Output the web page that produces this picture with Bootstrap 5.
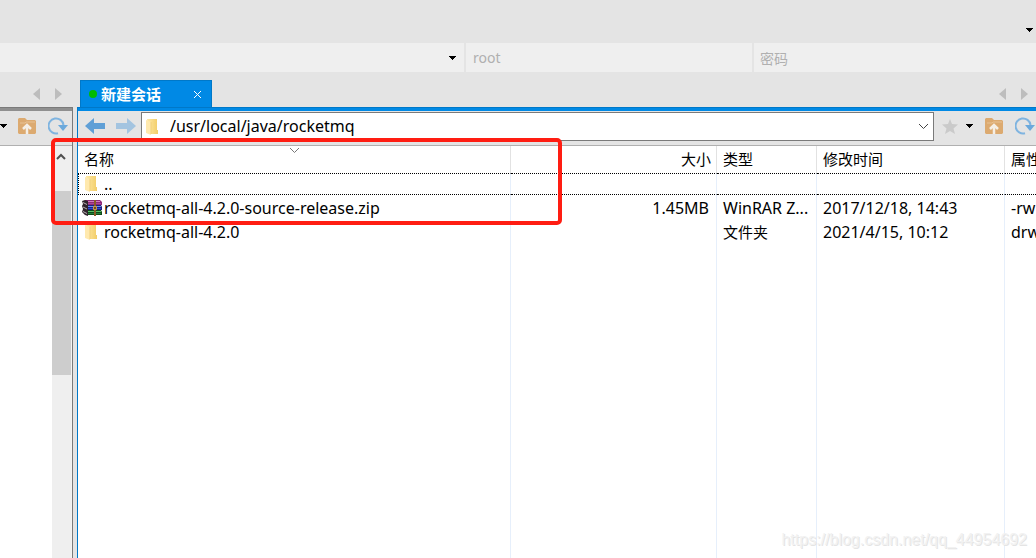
<!DOCTYPE html>
<html lang="zh-CN">
<head>
<meta charset="utf-8">
<meta name="viewport" content="width=device-width, initial-scale=1">
<title>新建会话</title>
<link href="https://cdn.jsdelivr.net/npm/bootstrap@5.3.0/dist/css/bootstrap.min.css" rel="stylesheet">
<style>
  :root { --chrome: #e4e4e4; --field: #efefef; --blue: #0089e5; --blue-edge: #0078c8; --edge: #7a7a7a; --split: #e6effb; }
  body { font-family: "Noto Sans", "Noto Sans CJK SC", sans-serif; font-size: 15px; line-height: 24px; color: #000; background: var(--chrome); }
  button { border: 0; background: none; padding: 0; display: flex; }
  svg { display: block; flex: none; }
  .menu-strip { height: 43px; padding: 28px 3px 0 0; }
  .login-bar { height: 29px; gap: 2px; font-size: 14px; }
  .login-field { background: var(--field); border: 0; border-radius: 0; outline: 0; min-width: 0; color: #000; }
  .login-field::placeholder { color: #b0b0b0; opacity: 1; }
  .host-box { flex: 0 0 464px; }
  .host-box select { appearance: none; width: 100%; height: 100%; }
  .host-box svg { position: absolute; right: 8px; top: 13px; pointer-events: none; }
  .user-field { flex: 0 0 286px; padding: 1px 7px 0; }
  .pass-field { padding: 2px 6px 0; }
  .panes { gap: 4px; }
  .local-pane { flex: 0 0 73px; }
  .tab-strip { height: 35px; }
  .tab-arrows { gap: 15px; padding: 16px 8px 0 0; }
  .local-pane .tab-arrows { padding-right: 11px; }
  .session-tab { margin: 8px 0 0 3px; width: 132px; padding: 0 10px 0 8px; background: var(--blue); border: 1px solid var(--blue-edge); border-bottom: 0; color: #fff; font-weight: 700; }
  .status-dot { width: 8px; height: 8px; background: #0b0; margin-right: 4px; }
  .local-frame { border-right: 1px solid var(--edge); border-top: 1px solid var(--edge); }
  .remote-frame { border-left: 1px solid var(--blue-edge); border-top: 1px solid var(--blue-edge); }
  .local-rule { height: 3px; background: #8f8f8f; }
  .remote-rule { height: 3px; background: var(--blue); }
  .tool-row { height: 35px; border-bottom: 1px solid #b0b0b0; padding-bottom: 4px; }
  .history { gap: 11px; padding: 0 5px 0 7px; }
  .path-box { height: 29px; margin-top: 1px; background: #fff; border: 1px solid var(--edge); padding: 0 4px; }
  .path-box input { border: 0; outline: 0; padding: 0 0 2px 8px; min-width: 0; font-size: 16px; color: #000; background: none; }
  .right-tools { flex: 0 0 102px; padding-left: 8px; overflow: hidden; }
  .scroll-track { width: 20px; background: var(--field); border-right: 1px solid #f4f4f4; }
  .scroll-up { height: 45px; padding: 7px 0 0 4px; }
  .scroll-thumb { flex: 0 0 184px; background: #cdcdcd; }
  .file-table { table-layout: fixed; width: 100%; height: 100%; border-collapse: separate; border-spacing: 0; }
  .file-table th, .file-table td { padding: 0 6px; height: 24px; border-right: 1px solid var(--split); overflow: hidden; white-space: nowrap; }
  .file-table td { font-size: 16px; padding-top: 2px; line-height: 22px; }
  .file-table td.kind { font-size: 15px; }
  .file-table th { height: 27px; padding-bottom: 2px; font-weight: 400; line-height: 22px; border-right-color: #e2e2e2; position: relative; }
  .file-table th:last-child, .file-table td:last-child { border-right: 0; }
  .file-table tr.current td { height: 22px; padding-top: 0; border-top: 1px dotted #000; border-bottom: 1px dotted #000; line-height: 20px; }
  .file-table tr.current td:first-child { border-left: 1px dotted #000; padding-left: 3px; }
  .file-table tr.filler td { height: auto; }
  .file-table td:first-child { padding-left: 4px; padding-right: 0; }
  .file-table .size { text-align: right; }
  .file-table th.size { padding-right: 5px; }
  .file-table td.size { padding-right: 7px; }
  .sort-mark { position: absolute; left: 211px; top: 1px; }
  .file-name { gap: 2px; }
  .file-name .folder { margin: 0 5px 0 3px; }
  .callout { position: absolute; left: 51px; top: 138px; width: 511px; height: 87px; border: 4px solid #ff1d12; border-radius: 5px; pointer-events: none; }
  .watermark { position: absolute; right: 9px; bottom: 6px; font: 16px/24px "Liberation Sans", sans-serif; color: #f2f2f2; text-shadow: 1px 1px 0 #e4e4e4; pointer-events: none; }
</style>
</head>
<body class="vh-100 overflow-hidden position-relative d-flex flex-column">

<svg width="0" height="0" class="position-absolute" aria-hidden="true">
  <defs>
    <linearGradient id="gold" x1="0" x2="1"><stop offset="0" stop-color="#ffe9a6"/><stop offset="1" stop-color="#f2cd68"/></linearGradient>
    <symbol id="caret" viewBox="0 0 7 4"><path d="M0 0h7v1H6v1H5v1H4v1H3V3H2V2H1V1H0z"/></symbol>
    <symbol id="folder" viewBox="0 0 12 16"><path d="M1 0h10v11h1v4H3z" fill="url(#gold)"/><path d="M0 1l5 2v13l-5-2z" fill="#ffe9ae"/><path d="M5 3v12" stroke="#f0cf7a" stroke-width="1"/></symbol>
    <symbol id="prev" viewBox="0 0 7 12"><path d="M7 0v12L0 6z" fill="#bdbdbd"/></symbol>
    <symbol id="next" viewBox="0 0 7 12"><path d="M0 0v12l7-6z" fill="#bdbdbd"/></symbol>
    <symbol id="back" viewBox="0 0 20 16"><path d="M0 8l9-8v5h11v6H9v5z"/></symbol>
    <symbol id="forward" viewBox="0 0 20 16"><path d="M20 8l-9-8v5H0v6h11v5z"/></symbol>
    <symbol id="upfolder" viewBox="0 0 18 16"><path d="M0 1l1-1h6l2 2h8l1 1v12l-1 1H1l-1-1z" fill="#dcaa70"/><path d="M2 5h5l1-1h9" stroke="#e8c294" fill="none"/><path d="M9 16V7M5 11l4-4 4 4" stroke="#f5efe6" stroke-width="2.500" fill="none"/></symbol>
    <symbol id="reload" viewBox="0 0 20 18"><path d="M10 16.200A7.500 7.500 0 1 1 15.500 8" stroke="#7fb4e0" stroke-width="2" fill="none"/><path d="M10 8h10l-5 6z" fill="#6ba9dc"/></symbol>
  </defs>
</svg>

<header>
  <div class="menu-strip d-flex justify-content-end">
    <button type="button" aria-label="更多"><svg width="7" height="4"><use href="#caret"/></svg></button>
  </div>
  <form class="login-bar d-flex">
    <div class="host-box position-relative">
      <select class="login-field" aria-label="主机"><option></option></select>
      <svg width="7" height="4"><use href="#caret"/></svg>
    </div>
    <input class="login-field user-field" type="text" placeholder="root" aria-label="root">
    <input class="login-field pass-field flex-grow-1" type="password" placeholder="密码" aria-label="密码">
  </form>
</header>

<main class="panes d-flex flex-grow-1">
  <section class="local-pane d-flex flex-column">
    <div class="tab-strip tab-arrows d-flex justify-content-end">
      <button type="button" aria-label="上一个"><svg width="7" height="12"><use href="#prev"/></svg></button>
      <button type="button" aria-label="下一个"><svg width="7" height="12"><use href="#next"/></svg></button>
    </div>
    <div class="local-frame d-flex flex-column flex-grow-1">
      <div class="local-rule"></div>
      <div class="tool-row d-flex align-items-center">
        <button type="button" aria-label="选项"><svg width="7" height="4"><use href="#caret"/></svg></button>
        <button type="button" class="ms-auto" aria-label="上级目录"><svg width="18" height="16"><use href="#upfolder"/></svg></button>
        <button type="button" class="mx-1 ps-2" aria-label="刷新"><svg width="20" height="18"><use href="#reload"/></svg></button>
      </div>
      <div class="bg-white flex-grow-1 d-flex justify-content-end">
        <div class="scroll-track d-flex flex-column">
          <button type="button" class="scroll-up" aria-label="向上滚动"><svg width="10" height="7"><path d="M1 6l4-4 4 4" fill="none" stroke="#505050" stroke-width="2"/></svg></button>
          <div class="scroll-thumb"></div>
        </div>
      </div>
    </div>
  </section>

  <section class="d-flex flex-column flex-grow-1 overflow-hidden">
    <div class="tab-strip d-flex justify-content-between">
      <div class="session-tab d-flex align-items-center">
        <span class="status-dot rounded-circle"></span><span>新建会话</span>
        <button type="button" class="ms-auto" aria-label="关闭"><svg width="7" height="7"><path d="M0 0l7 7M7 0L0 7" stroke="#fff"/></svg></button>
      </div>
      <div class="tab-arrows d-flex">
        <button type="button" aria-label="上一个"><svg width="7" height="12"><use href="#prev"/></svg></button>
        <button type="button" aria-label="下一个"><svg width="7" height="12"><use href="#next"/></svg></button>
      </div>
    </div>
    <div class="remote-frame d-flex flex-column flex-grow-1">
      <div class="remote-rule"></div>
      <div class="tool-row d-flex align-items-center">
        <div class="history d-flex">
          <button type="button" aria-label="后退"><svg width="20" height="16" fill="#5f9fd6"><use href="#back"/></svg></button>
          <button type="button" aria-label="前进"><svg width="20" height="16" fill="#a3c4e0"><use href="#forward"/></svg></button>
        </div>
        <div class="path-box d-flex align-items-center flex-grow-1">
          <svg class="ms-0" width="12" height="16"><use href="#folder"/></svg>
          <input class="flex-grow-1 ms-1" type="text" value="/usr/local/java/rocketmq" aria-label="路径">
          <button type="button" aria-label="展开"><svg width="11" height="7"><path d="M1 1l4.500 4.500L10 1" fill="none" stroke="#444"/></svg></button>
        </div>
        <div class="right-tools d-flex align-items-center">
          <button type="button" aria-label="收藏"><svg width="16" height="15"><path d="M8 0l2 5 6 .5-4.500 4 1.500 5.500-5-3-5 3 1.500-5.500L0 5.500 6 5z" fill="#cacaca"/></svg></button>
          <button type="button" class="ps-2" aria-label="收藏列表"><svg width="7" height="4"><use href="#caret"/></svg></button>
          <button type="button" class="ps-2 ms-1" aria-label="上级目录"><svg width="18" height="16"><use href="#upfolder"/></svg></button>
          <button type="button" class="ps-2 ms-1" aria-label="刷新"><svg width="20" height="18"><use href="#reload"/></svg></button>
        </div>
      </div>
      <div class="bg-white flex-grow-1">
        <table class="file-table">
          <colgroup><col style="width:433px"><col style="width:206px"><col style="width:100px"><col style="width:188px"><col></colgroup>
          <thead>
            <tr><th>名称<svg class="sort-mark" width="11" height="7"><path d="M1 1l4.500 4.500L10 1" fill="none" stroke="#777"/></svg></th><th class="size">大小</th><th>类型</th><th>修改时间</th><th>属性</th></tr>
          </thead>
          <tbody>
            <tr class="current"><td><div class="file-name d-flex align-items-center"><svg class="folder" width="12" height="16"><use href="#folder"/></svg>..</div></td><td></td><td></td><td></td><td></td></tr>
            <tr><td><div class="file-name d-flex align-items-center">
              <svg width="20" height="16">
                <path d="M3 0h15l2 2v3H4z" fill="#8d2a78"/><path d="M4 1.500h14" stroke="#d27cbd"/><path d="M5 3.500h14" stroke="#b04596"/>
                <path d="M4 5h15l1 2v3H4z" fill="#1c2380"/><path d="M5 6.500h14" stroke="#6d8cf0"/><path d="M5 8.500h14" stroke="#2f45d0"/>
                <path d="M4 10h15l1 2v3H5z" fill="#0f4a1a"/><path d="M5 11.500h14" stroke="#58c068"/><path d="M5 13.500h14" stroke="#208034"/>
                <path d="M3 0L0 1l1 3-1 2 1 3-1 3 3 3 3 1V1z" fill="#30242c"/><path d="M1 2.500l4 2M1 7l4 2M1 11.500l4 2" stroke="#b8b0b4"/>
                <path d="M12 0h2v16h-2z" fill="#8a5a24"/><path d="M11.500 6.500h3v3h-3z" fill="#6b4a2a" stroke="#c89848"/>
              </svg>rocketmq-all-4.2.0-source-release.zip</div></td><td class="size">1.45MB</td><td>WinRAR Z...</td><td>2017/12/18, 14:43</td><td>-rw</td></tr>
            <tr><td><div class="file-name d-flex align-items-center"><svg class="folder" width="12" height="16"><use href="#folder"/></svg>rocketmq-all-4.2.0</div></td><td></td><td class="kind">文件夹</td><td>2021/4/15, 10:12</td><td>drw</td></tr>
            <tr class="filler"><td></td><td></td><td></td><td></td><td></td></tr>
          </tbody>
        </table>
      </div>
    </div>
  </section>
</main>

<div class="callout"></div>
<div class="watermark">https://blog.csdn.net/qq_44954692</div>

<script src="https://cdn.jsdelivr.net/npm/bootstrap@5.3.0/dist/js/bootstrap.bundle.min.js"></script>
</body>
</html>
